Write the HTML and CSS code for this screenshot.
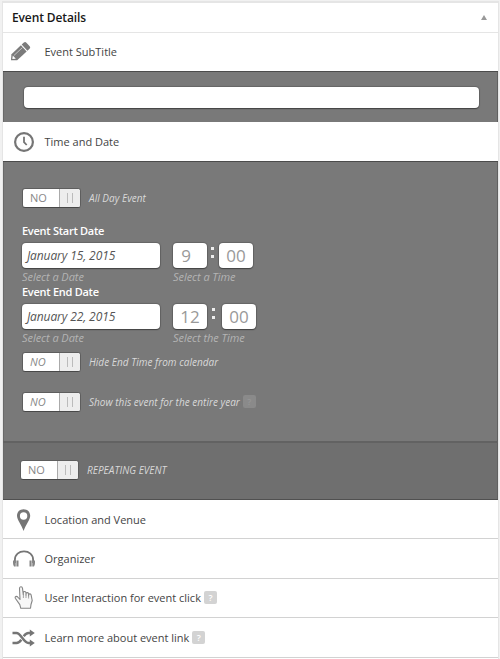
FILE: index.html
```html
<!DOCTYPE html>
<html lang="en">
<head>
<meta charset="utf-8">
<title>Event Details</title>
<link rel="stylesheet" href="styles.css">
</head>
<body>
<main class="panel">
  <header class="header"><h1><span class="t-head">Event Details</span></h1><i class="arrow"></i></header>

  <div class="row row-subtitle">
    <svg class="icon" viewBox="0 0 28 28"><g transform="translate(1 22.3) rotate(-43)" fill="#7b7b7b"><path d="M0 0L4.5-4.2H17.5V4.2H4.5z"/><path d="M18.5-4.2H21.5Q23.3-4.2 23.3-2.4V2.4Q23.3 4.2 21.5 4.2H18.5z"/><path d="M5.5-1.5H17" stroke="#d0d0d0" stroke-width=".8"/><path d="M1.8 0L4.5-2.2V2.2z" fill="#fff"/></g></svg>
    <span class="t-sub">Event SubTitle</span>
  </div>
  <section class="dark subtitle-box"><div class="field subtitle-field"></div></section>

  <div class="row row-time">
    <svg class="icon" viewBox="0 0 28 28"><circle cx="14" cy="14" r="8.9" fill="none" stroke="#757575" stroke-width="2.2"/><path d="M14 8.7V14.2L16.7 17" fill="none" stroke="#757575" stroke-width="1.8"/></svg>
    <span>Time and Date</span>
  </div>
  <section class="dark time-box">
    <div class="option"><span class="toggle"><b>NO</b><i></i></span><em>All Day Event</em></div>
    <div class="label label-start"><span>Event Start Date</span></div>
    <div class="inputs"><div class="field date"><span>January 15, 2015</span></div><div class="field num single">9</div><span class="colon"></span><div class="field num">00</div></div>
    <div class="captions"><span>Select a Date</span><span>Select a Time</span></div>
    <div class="label"><span>Event End Date</span></div>
    <div class="inputs"><div class="field date"><span>January 22, 2015</span></div><div class="field num">12</div><span class="colon wide"></span><div class="field num">00</div></div>
    <div class="captions"><span>Select a Date</span><span>Select the Time</span></div>
    <div class="option hide-end"><span class="toggle slanted"><b>NO</b><i></i></span><em>Hide End Time from calendar</em></div>
    <div class="option year"><span class="toggle slanted"><b>NO</b><i></i></span><em>Show this event for the entire year</em><span class="help faint">?</span></div>
  </section>
  <section class="dark repeat-box">
    <div class="option"><span class="toggle"><b>NO</b><i></i></span><em class="caps">REPEATING EVENT</em></div>
  </section>

  <div class="row item">
    <svg class="icon" viewBox="0 0 28 28"><path fill="#757575" fill-rule="evenodd" d="M13.6 3.2C9.7 3.2 7 6 7 9.7C7 13.8 11.5 18.5 13.6 25C15.7 18.5 20.2 13.8 20.2 9.7C20.2 6 17.5 3.2 13.6 3.2zM13.6 6.3A3.7 3.7 0 1 1 13.6 13.7A3.7 3.7 0 1 1 13.6 6.3z"/></svg>
    <span>Location and Venue</span>
  </div>
  <div class="row item">
    <svg class="icon" viewBox="0 0 28 28"><path d="M4.9 18V14.8C4.9 9.6 9 6.4 14 6.4S23.1 9.6 23.1 14.8V18" fill="none" stroke="#757575" stroke-width="1.8"/><path d="M3 15.5H5.7V21.4H4Q3 20 3 18zM6.4 15.5H8.5V21.4H6.4zM22.3 15.5H25V18Q25 20 24 21.4H22.3zM19.5 15.5H21.6V21.4H19.5z" fill="#858585"/></svg>
    <span>Organizer</span>
  </div>
  <div class="row item">
    <svg class="icon" viewBox="0 0 28 28"><path d="M10 15.5L9.5 4.5C9.4 2.4 12.2 2.2 12.5 4.3L13.3 10.6V8.7C13.5 7 15.8 7.3 16 9V11V9.6C16.4 8 18.5 8.4 18.6 10V12V10.7C19.2 9.2 21.1 9.8 21.2 11.3L22.2 16.5L21 20.5L20.5 24.3H10.8L9.8 20.6L5.3 14.3C4.5 12.7 6.5 11.8 7.7 13z" fill="#f7f7f7" stroke="#858585" stroke-width="1.1" stroke-linejoin="round"/><path d="M13.4 10.5V14M16 10.8V14M18.6 12V14.5" stroke="#909090" stroke-width=".8"/></svg>
    <span>User Interaction for event click</span><span class="help">?</span>
  </div>
  <div class="row item">
    <svg class="icon" viewBox="0 0 28 28"><path d="M2.5 9H6.5C11 9 13.5 19 18.5 19H21M2.5 19H6.5C8.7 19 10.2 17.4 11.3 15.8M13.7 12.2C15 10.4 16.5 9 18.5 9H21" fill="none" stroke="#757575" stroke-width="2.4"/><path d="M19.8 5.5L24.8 9L19.8 12.5zM19.8 15.5L24.8 19L19.8 22.5z" fill="#757575"/></svg>
    <span>Learn more about event link</span><span class="help">?</span>
  </div>
</main>
</body>
</html>
```
FILE: styles.css
```css
* { box-sizing: border-box; }
body { margin: 0; padding: 1px 1px 0 2px; height: 659px; overflow: hidden; background: #f1f1f1; font: 11px/14px "Open Sans", "Noto Sans", sans-serif; color: #444; }
.panel { border: solid #e5e5e5; border-width: 2px 1px 0 1px; height: 658px; background: #fff; }
.header { height: 30px; border-bottom: 1px solid #e5e5e5; display: flex; justify-content: space-between; align-items: center; padding: 0 11px 0 9px; }
h1 { margin: 0; font-size: 12px; line-height: 16px; font-weight: 600; letter-spacing: -.12px; color: #181818; }
.arrow { border: solid transparent; border-width: 0 3.5px 5px; border-bottom-color: #999; }
.row { display: flex; align-items: center; padding-left: 7px; }
.row > span { white-space: nowrap; }
.icon { width: 28px; height: 28px; margin-right: 6.5px; flex: none; }
.row-subtitle { height: 38px; }
.row-time { height: 39px; }
.dark { background: #797979; border-top: 1px solid #4b4b4b; box-shadow: inset 1px 0 #696969, inset -1px 0 #606060; }
.subtitle-box { height: 51px; padding: 15px 19px 0 21px; }
.field { background: #fff; border-radius: 4px; box-shadow: 0 1px 1px #444, 0 0 1px 1px #656565; }
.subtitle-field { height: 21px; }
.time-box { height: 280px; padding: 26px 0 0 19px; }
.option { display: flex; align-items: center; height: 20px; }
.toggle { display: flex; width: 59px; height: 20px; border-radius: 3px; overflow: hidden; background: #fff; border: 1px solid #5e5e5e; border-bottom-color: #484848; }
.toggle b { width: 36px; padding-left: 7px; font-size: 11px; line-height: 17px; font-weight: 400; color: #888; }
.toggle i { flex: 1; border-left: 1px solid #aaa; display: flex; background: linear-gradient(#bbb, #bbb) 7px 4px / 1px 10px no-repeat, linear-gradient(#bbb, #bbb) 12px 4px / 1px 10px no-repeat, #ededed; }
.slanted b { font-style: italic; }
.option em { margin-left: 8px; font-size: 10px; letter-spacing: .02px; color: #d8d8d8; }
.label { height: 13px; line-height: 13px; font-weight: 600; letter-spacing: -.27px; color: #fff; }
.label-start { margin-top: 16px; }
.inputs { display: flex; align-items: center; height: 25px; margin-top: 6px; }
.date { width: 138px; height: 25px; margin-right: 13px; padding-left: 5px; line-height: 25px; font-size: 12px; letter-spacing: -.1px; font-style: italic; color: #555; }
.num { width: 34px; height: 25px; text-align: center; line-height: 25px; font-size: 17px; color: #999; }
.single { padding-right: 8px; }
.colon { width: 12px; height: 12px; margin-top: -5px; background: linear-gradient(#eee, #eee) 4px 0 / 3px 3px no-repeat, linear-gradient(#eee, #eee) 4px 8px / 3px 3px no-repeat; }
.wide { width: 15px; background-position: 5px 0, 5px 8px; }
.captions { display: grid; grid-template-columns: 151px auto; height: 17px; line-height: 17px; font-size: 11px; letter-spacing: -.05px; font-style: italic; color: #b4b4b4; }
.hide-end { margin-top: 6px; }
.year { margin-top: 20px; }
.repeat-box { height: 59px; background: #6f6f6f; border-top: 2px solid #626262; border-bottom: 1px solid #505050; padding: 17px 0 0 17px; }
.item { height: 39.4px; padding-top: 1px; border-bottom: 1px solid #d2d2d2; }
.help { width: 13px; height: 13px; margin: -1px 0 0 3px; border-radius: 2px; background: #d3d3d3; color: #fff; text-align: center; font-size: 9px; line-height: 13px; font-weight: 600; }
.faint { background: #8a8a8a; color: #969696; }
```
